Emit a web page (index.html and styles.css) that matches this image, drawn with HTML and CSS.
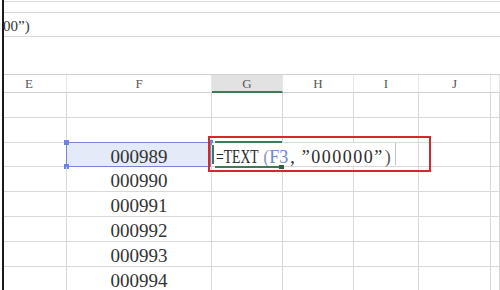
FILE: index.html
```html
<!DOCTYPE html>
<html lang="en">
<head>
  <meta charset="UTF-8">
  <meta name="viewport" content="width=device-width, initial-scale=1.0">
  <title>TEXT formula</title>
  <link rel="stylesheet" href="styles.css">
</head>
<body>
  <div class="app">
    <div class="ribbon"></div>
    <div class="fx-bar"><span class="fx-text">00”)</span></div>
    <div class="blank"></div>
    <div class="sheet">
      <div class="col-head">
        <div class="hd hd-e">E</div>
        <div class="hd">F</div>
        <div class="hd cur">G</div>
        <div class="hd">H</div>
        <div class="hd">I</div>
        <div class="hd">J</div>
        <div class="hd"></div>
      </div>
      <div class="row">
        <div class="cell"></div><div class="cell"></div><div class="cell"></div><div class="cell"></div><div class="cell"></div><div class="cell"></div><div class="cell"></div>
      </div>
      <div class="row">
        <div class="cell"></div><div class="cell"></div><div class="cell"></div><div class="cell"></div><div class="cell"></div><div class="cell"></div><div class="cell"></div>
      </div>
      <div class="row">
        <div class="cell"></div>
        <div class="cell sel">
          000989
          <span class="grip grip-tl"></span>
          <span class="grip grip-bl"></span>
          <span class="grip grip-tr"></span>
        </div>
        <div class="cell editing">
          <div class="editor"><span class="fn">=TEXT</span><span class="paren">(</span><span class="ref">F3</span><span class="comma">,</span><span class="str">”000000”</span><span class="close">)</span></div>
          <div class="active"></div>
          <span class="fill-handle"></span>
          <div class="mark"></div>
        </div>
        <div class="cell"></div><div class="cell"></div><div class="cell"></div><div class="cell"></div>
      </div>
      <div class="row">
        <div class="cell"></div><div class="cell">000990</div><div class="cell"></div><div class="cell"></div><div class="cell"></div><div class="cell"></div><div class="cell"></div>
      </div>
      <div class="row">
        <div class="cell"></div><div class="cell">000991</div><div class="cell"></div><div class="cell"></div><div class="cell"></div><div class="cell"></div><div class="cell"></div>
      </div>
      <div class="row">
        <div class="cell"></div><div class="cell">000992</div><div class="cell"></div><div class="cell"></div><div class="cell"></div><div class="cell"></div><div class="cell"></div>
      </div>
      <div class="row">
        <div class="cell"></div><div class="cell">000993</div><div class="cell"></div><div class="cell"></div><div class="cell"></div><div class="cell"></div><div class="cell"></div>
      </div>
      <div class="row">
        <div class="cell"></div><div class="cell">000994</div><div class="cell"></div><div class="cell"></div><div class="cell"></div><div class="cell"></div><div class="cell"></div>
      </div>
    </div>
  </div>
</body>
</html>
```

FILE: styles.css
```css
body {
  margin: 0;
  background-color: #fff;
  font-family: "Liberation Serif", serif;
  color: #333;
}
.app {
  margin-left: 2px;
  border-left: 2px solid #1a1a1a;
  height: 290px;
  overflow: hidden;
}
.ribbon {
  margin-top: 1px;
  height: 10px;
  border-top: 1px solid #d9d9d9;
  border-bottom: 1px solid #d9d9d9;
}
.fx-bar {
  height: 24px;
  box-sizing: border-box;
  border-bottom: 1px solid #d9d9d9;
  padding-top: 4px;
  font-size: 15px;
  line-height: 18px;
  white-space: nowrap;
  overflow: hidden;
}
.fx-text {
  margin-left: -1px;
}
.blank {
  height: 37px;
}
.col-head,
.row {
  display: grid;
  grid-template-columns: 63px 145px 71px 71px 65px 72px 1fr;
}
.col-head {
  border-top: 1px solid #d0d0d0;
}
.hd {
  height: 18px;
  box-sizing: border-box;
  border-right: 1px solid #e6e6e6;
  border-bottom: 1px solid #d0d0d0;
  font-size: 13px;
  line-height: 17px;
  text-align: center;
  color: #555;
}
.hd-e {
  padding-right: 12px;
}
.hd.cur {
  background-color: #e2e2e2;
  border-bottom: 2px solid #3d7a55;
}
.cell {
  position: relative;
  height: 24.8px;
  box-sizing: border-box;
  border-right: 1px solid #d9d9d9;
  border-bottom: 1px solid #d9d9d9;
  font-size: 19px;
  line-height: 27px;
  text-align: center;
  color: #333;
}
.sel {
  background-color: #e4eaf7;
}
.sel::before {
  content: "";
  position: absolute;
  top: -1px;
  left: -1px;
  right: 0;
  bottom: -1px;
  border: 1.5px solid #7189d3;
}
.grip {
  position: absolute;
  width: 5px;
  height: 5px;
  background-color: #6d85d2;
}
.grip-tl { top: -3px; left: -3px; }
.grip-bl { bottom: -3px; left: -3px; }
.grip-tr { top: -3px; right: -2px; }
.editor {
  position: absolute;
  top: 0;
  left: 0;
  width: 184px;
  height: calc(100% - 1px);
  box-sizing: border-box;
  background-color: #fff;
  border-right: 1px solid #c4c4c4;
  padding-left: 4px;
  font-size: 18px;
  line-height: 28px;
  text-align: left;
  white-space: nowrap;
  color: #2a2a2a;
  z-index: 1;
}
.editor span {
  display: inline-block;
}
.fn {
  transform: scaleX(0.76);
  transform-origin: 0 50%;
  margin-right: -13px;
}
.paren {
  margin-left: 4px;
  color: #8a9ac6;
}
.ref {
  color: #6d86cc;
  margin-left: 0;
}
.comma {
  margin-left: 2px;
  margin-right: 7px;
}
.str {
  letter-spacing: 1.5px;
}
.close {
  margin-left: 1px;
  color: #555;
}
.active {
  position: absolute;
  top: -2px;
  left: 3px;
  right: 0;
  bottom: -2px;
  border-top: 2px solid #3d7a55;
  border-bottom: 2px solid #3d7a55;
  z-index: 2;
}
.active::before {
  content: "";
  position: absolute;
  left: -3px;
  top: 2px;
  width: 2px;
  height: 19px;
  background-color: #3d7a55;
}
.fill-handle {
  position: absolute;
  right: -2px;
  bottom: -3px;
  width: 5px;
  height: 4px;
  background-color: #2f5e42;
  z-index: 3;
}
.mark {
  position: absolute;
  top: -7px;
  left: -4px;
  width: 223px;
  height: 36px;
  box-sizing: border-box;
  border: 2px solid #d3292e;
  z-index: 4;
}
```
